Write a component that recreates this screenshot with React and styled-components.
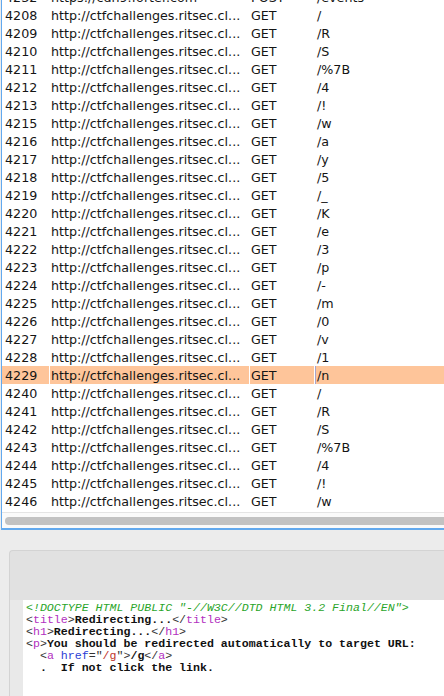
import styled, { createGlobalStyle } from 'styled-components';

const Global = createGlobalStyle`
    html, body {
        margin: 0;
        padding: 0;
        background: #ececec;
        overflow: hidden;
    }
`

const Page = styled.div`
    width: 444px;
    height: 696px;
    display: flex;
    flex-direction: column;
    overflow: hidden;
    background: #ececec;
`

const TableFrame = styled.div`
    background: #ffffff;
    border-left: 1px solid #62a9ee;
    border-bottom: 2px solid #62a9ee;
    margin-left: 1px;
    display: flex;
    flex-direction: column;
`

const Viewport = styled.div`
    height: 512px;
    overflow: hidden;
    border-bottom: 1px solid #e4e4e4;
`

const Rows = styled.div`
    margin-top: -12px;
`

const Row = styled.div`
    display: grid;
    grid-template-columns: 48px 200px 65px 1fr;
    height: 18px;
    align-items: stretch;
    font-family: "DejaVu Sans", sans-serif;
    font-size: 12.7px;
    color: #151515;
`

const Cell = styled.div`
    display: flex;
    align-items: center;
    white-space: nowrap;
    overflow: hidden;
    padding-left: ${p => p.$pad}px;
    background: ${p => (p.$selected ? '#fec59a' : 'transparent')};
    margin-right: ${p => (p.$selected && !p.$last ? 1 : 0)}px;
    box-shadow: ${p => (p.$selected && p.$last ? 'inset 1px 0 0 #a9a3c8' : 'none')};
`

const Track = styled.div`
    height: 15px;
    display: flex;
    align-items: center;
    padding-left: 3px;
    background: #fafafa;
`

const Thumb = styled.div`
    height: 8px;
    flex: 1;
    margin-right: -6px;
    border-radius: 4px;
    background: #c2c2c2;
`

const Panel = styled.div`
    margin: 20px 0 0 9px;
    flex: 1;
    border: 1px solid #d3d3d3;
    border-right: none;
    border-bottom: none;
    border-top-left-radius: 4px;
    background: #e1e1e1;
    padding-top: 49px;
    display: flex;
`

const Gutter = styled.div`
    width: 13px;
    background: #e9e9e9;
`

const Editor = styled.pre`
    flex: 1;
    margin: 0;
    padding: 2px 0 0 3px;
    background: #ffffff;
    font-family: "Liberation Mono", monospace;
    font-size: 11.6px;
    line-height: 12px;
    color: #222;
    white-space: pre;
    overflow: hidden;
`

const Doctype = styled.span`
    color: #2aa52a;
    font-style: italic;
`

const Punct = styled.span`
    color: #333;
`

const Tag = styled.span`
    color: #b22fc0;
`

const Attr = styled.span`
    color: #2c3ed6;
`

const Val = styled.span`
    color: #c0332b;
`

const Bold = styled.span`
    font-weight: bold;
    color: #111;
`

const rows = [
    ['4232', 'https://cdn9.forter.com', 'POST', '/events'],
    ['4208', '', 'GET', '/'],
    ['4209', '', 'GET', '/R'],
    ['4210', '', 'GET', '/S'],
    ['4211', '', 'GET', '/%7B'],
    ['4212', '', 'GET', '/4'],
    ['4213', '', 'GET', '/!'],
    ['4215', '', 'GET', '/w'],
    ['4216', '', 'GET', '/a'],
    ['4217', '', 'GET', '/y'],
    ['4218', '', 'GET', '/5'],
    ['4219', '', 'GET', '/_'],
    ['4220', '', 'GET', '/K'],
    ['4221', '', 'GET', '/e'],
    ['4222', '', 'GET', '/3'],
    ['4223', '', 'GET', '/p'],
    ['4224', '', 'GET', '/-'],
    ['4225', '', 'GET', '/m'],
    ['4226', '', 'GET', '/0'],
    ['4227', '', 'GET', '/v'],
    ['4228', '', 'GET', '/1'],
    ['4229', '', 'GET', '/n', true],
    ['4240', '', 'GET', '/'],
    ['4241', '', 'GET', '/R'],
    ['4242', '', 'GET', '/S'],
    ['4243', '', 'GET', '/%7B'],
    ['4244', '', 'GET', '/4'],
    ['4245', '', 'GET', '/!'],
    ['4246', '', 'GET', '/w'],
]

const URL = 'http://ctfchallenges.ritsec.cl...'

const T = ({ name }) => (
    <>
        <Punct>&lt;</Punct><Tag>{name}</Tag><Punct>&gt;</Punct>
    </>
)

const C = ({ name }) => (
    <>
        <Punct>&lt;/</Punct><Tag>{name}</Tag><Punct>&gt;</Punct>
    </>
)

const App = () => {
    return (
        <Page>
            <Global />
            <TableFrame>
                <Viewport>
                    <Rows>
                        {rows.map(([num, url, method, path, sel]) => (
                            <Row key={num}>
                                <Cell $pad={3} $selected={sel}>{num}</Cell>
                                <Cell $pad={1} $selected={sel}>{url || URL}</Cell>
                                <Cell $pad={1} $selected={sel}>{method}</Cell>
                                <Cell $pad={2} $selected={sel} $last>{path}</Cell>
                            </Row>
                        ))}
                    </Rows>
                </Viewport>
                <Track>
                    <Thumb />
                </Track>
            </TableFrame>
            <Panel>
                <Gutter />
                <Editor>
                    <Doctype>{'<!DOCTYPE HTML PUBLIC "-//W3C//DTD HTML 3.2 Final//EN">'}</Doctype>{'\n'}
                    <T name="title" /><Bold>Redirecting...</Bold><C name="title" />{'\n'}
                    <T name="h1" /><Bold>Redirecting...</Bold><C name="h1" />{'\n'}
                    <T name="p" /><Bold>You should be redirected automatically to target URL:</Bold>{'\n'}
                    {'  '}<Punct>&lt;</Punct><Tag>a</Tag> <Attr>href</Attr><Punct>="</Punct><Val>/g</Val><Punct>"&gt;</Punct><Bold>/g</Bold><C name="a" />{'\n'}
                    <Bold>{'  .  If not click the link.'}</Bold>
                </Editor>
            </Panel>
        </Page>
    )
}

export default App;
